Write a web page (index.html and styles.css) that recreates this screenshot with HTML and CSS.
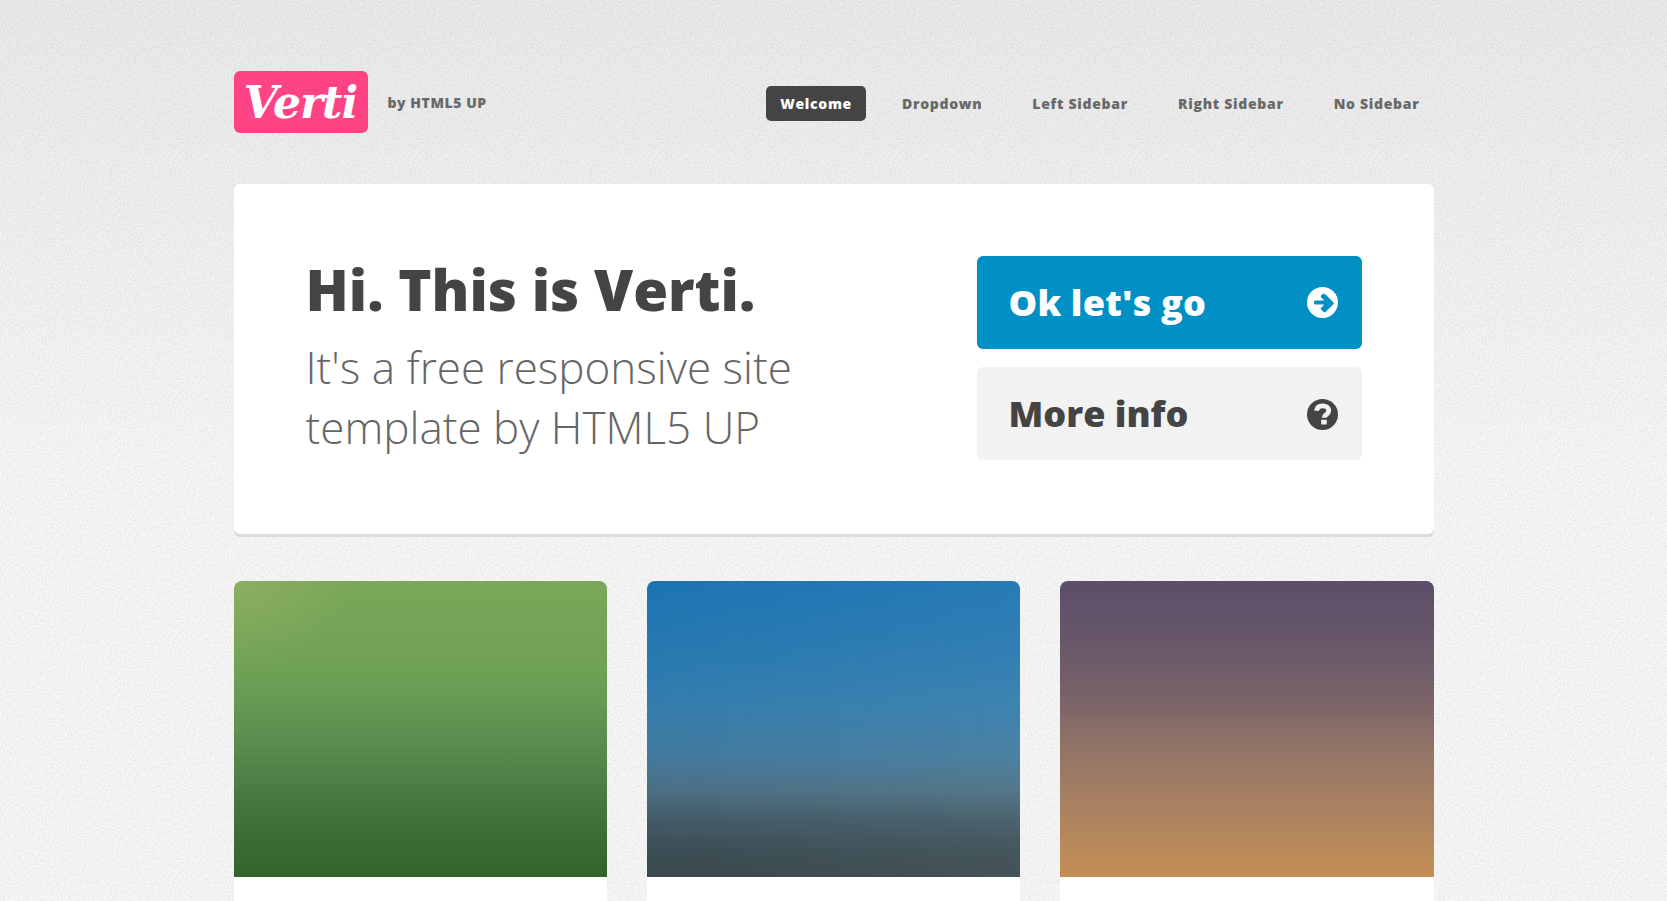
FILE: index.html
```html
<!DOCTYPE html>
<html lang="en">

<head>
    <meta charset="UTF-8">
    <meta name="viewport" content="width=device-width, initial-scale=1.0">
    <title>Verti by HTML5 UP</title>
    <link rel="stylesheet" href="styles.css">
</head>

<body>
    <div class="page">
        <div class="container">
            <header class="header">
                <div class="brand">
                    <a href="#" class="logo">Verti</a>
                    <span class="byline">by HTML5 UP</span>
                </div>
                <nav class="nav">
                    <a href="#" class="nav-link active">Welcome</a>
                    <a href="#" class="nav-link">Dropdown</a>
                    <a href="#" class="nav-link">Left Sidebar</a>
                    <a href="#" class="nav-link">Right Sidebar</a>
                    <a href="#" class="nav-link">No Sidebar</a>
                </nav>
            </header>

            <section class="banner">
                <div class="banner-text">
                    <h2>Hi. This is Verti.</h2>
                    <p>It's a free responsive site<br>template by HTML5 UP</p>
                </div>
                <div class="banner-actions">
                    <a href="#" class="button button-primary">
                        <span>Ok let's go</span>
                        <svg class="button-icon" viewBox="0 0 32 32">
                            <path fill-rule="evenodd" d="M16 0a16 16 0 1 1 0 32a16 16 0 1 1 0-32zM17.200 6.200l-2.600 2.600a1.300 1.300 0 0 0 0 1.900l3.300 3.200H8.600a1.300 1.300 0 0 0-1.300 1.300v1.600a1.300 1.300 0 0 0 1.300 1.300h9.300l-3.300 3.200a1.300 1.300 0 0 0 0 1.900l2.600 2.600a1.300 1.300 0 0 0 1.900 0l8.100-8.100a1.300 1.300 0 0 0 0-1.900l-8.100-8.100a1.300 1.300 0 0 0-1.900 0z"/>
                        </svg>
                    </a>
                    <a href="#" class="button button-alt">
                        <span>More info</span>
                        <svg class="button-icon" viewBox="0 0 32 32">
                            <circle cx="16" cy="16" r="16"/>
                            <path class="icon-cut" d="M9.800 12.200c.4-3.400 3-5.100 6.400-5.100c3.500 0 6.200 2 6.200 5c0 3.900-4.700 4-4.700 7.200"/>
                            <rect class="icon-dot" x="14.600" y="21.300" width="5.800" height="5" rx=".7"/>
                        </svg>
                    </a>
                </div>
            </section>

            <section class="features">
                <div class="feature">
                    <div class="feature-image image-green"></div>
                    <div class="feature-body"></div>
                </div>
                <div class="feature">
                    <div class="feature-image image-blue"></div>
                    <div class="feature-body"></div>
                </div>
                <div class="feature">
                    <div class="feature-image image-sunset"></div>
                    <div class="feature-body"></div>
                </div>
            </section>
        </div>
    </div>
</body>

</html>
```

FILE: styles.css
```css
* {
    box-sizing: border-box;
}

html,
body {
    margin: 0;
    padding: 0;
}

body {
    font-family: "Open Sans", Arial, sans-serif;
    color: #474747;
    background-color: #f6f6f6;
    background-image:
        linear-gradient(to bottom, rgba(0, 0, 0, 0.05), rgba(0, 0, 0, 0) 480px),
        url("data:image/svg+xml,%3Csvg xmlns='http://www.w3.org/2000/svg' width='240' height='240'%3E%3Cfilter id='n'%3E%3CfeTurbulence type='fractalNoise' baseFrequency='.55' numOctaves='3' stitchTiles='stitch'/%3E%3CfeColorMatrix values='0 0 0 0 0 0 0 0 0 0 0 0 0 0 0 1.200 0 0 0 -.5'/%3E%3C/filter%3E%3Crect width='240' height='240' filter='url(%23n)' opacity='.12'/%3E%3C/svg%3E");
}

a {
    text-decoration: none;
}

/* Keeps the page at one window height, the cards run past the fold */
.page {
    height: 100vh;
    overflow: hidden;
}

.container {
    width: 1200px;
    margin: 0 auto;
    padding-top: 71px;
}

/* Header */
.header {
    display: flex;
    justify-content: space-between;
    align-items: center;
    height: 62px;
}

.brand {
    display: flex;
    align-items: center;
}

.logo {
    display: flex;
    justify-content: center;
    align-items: center;
    width: 134px;
    height: 62px;
    background-color: #ff4486;
    border-radius: 6px;
    color: #fff;
    font-family: "DejaVu Serif", serif;
    font-size: 44px;
    font-style: italic;
    font-weight: bold;
    letter-spacing: -1px;
}

.byline {
    margin-left: 20px;
    padding-top: 1px;
    font-size: 14px;
    font-weight: 800;
    letter-spacing: 0.55px;
    color: #696969;
}

.nav {
    display: flex;
    align-items: center;
    gap: 22px;
    margin-top: 2px;
}

.nav-link {
    padding: 0 14px;
    height: 35px;
    line-height: 35px;
    border-radius: 5px;
    font-size: 14px;
    font-weight: 800;
    letter-spacing: 0.7px;
    color: #696969;
}

.nav-link.active {
    background-color: #444;
    color: #fff;
}

/* Banner */
.banner {
    display: flex;
    justify-content: space-between;
    align-items: center;
    height: 350px;
    margin-top: 51px;
    padding: 0 72px;
    background-color: #fff;
    border-radius: 6px;
    box-shadow: 0 3px 0 0 #dcdcdc;
}

.banner-text {
    margin-top: -8px;
}

.banner-text h2 {
    margin: 0;
    font-size: 56.500px;
    font-weight: 800;
    line-height: 72px;
    color: #444;
}

.banner-text p {
    margin: 11px 0 0;
    font-size: 44px;
    font-weight: 300;
    line-height: 60px;
    color: #666;
}

.banner-actions {
    display: flex;
    flex-direction: column;
    gap: 18px;
    width: 385px;
    margin-top: -2px;
}

.button {
    display: flex;
    justify-content: space-between;
    align-items: center;
    height: 93px;
    padding: 0 24px 0 32px;
    border-radius: 6px;
    font-size: 36px;
    font-weight: 800;
}

.button-primary {
    background-color: #0090c5;
    color: #fff;
    letter-spacing: 0.2px;
}

.button-alt {
    background-color: #f2f2f2;
    color: #444;
}

.button-icon {
    width: 31px;
    height: 31px;
    margin-top: -1px;
    fill: currentColor;
}

.button-alt .button-icon {
    margin-top: 1px;
}

.icon-cut {
    fill: none;
    stroke: #f2f2f2;
    stroke-width: 5;
}

.icon-dot {
    fill: #f2f2f2;
}

/* Feature cards */
.features {
    display: grid;
    grid-template-columns: repeat(3, 1fr);
    gap: 40px;
    margin-top: 47px;
}

.feature-image {
    height: 296px;
    border-radius: 8px 8px 0 0;
}

.feature-body {
    height: 120px;
    background-color: #fff;
}

.image-green {
    background:
        radial-gradient(ellipse 120px 90px at 0 0, rgba(160, 180, 105, 0.5), rgba(160, 180, 105, 0)),
        linear-gradient(to bottom, #7aa858 0%, #6fa156 30%, #5e9150 50%, #4b7f44 68%, #3c6f37 84%, #32632d 100%);
}

.image-blue {
    background:
        linear-gradient(to right, rgba(255, 255, 255, 0), rgba(255, 255, 255, 0.05)),
        linear-gradient(to bottom, #1b74b2 0%, #2678b0 22%, #337dad 42%, #43799c 60%, #4b6f82 71%, #425a66 81%, #3b4c53 92%, #39494e 100%);
}

.image-sunset {
    background: linear-gradient(to bottom, #5d4e69 0%, #66566a 18%, #786269 38%, #937566 58%, #a98162 76%, #c48f55 100%);
}
```
